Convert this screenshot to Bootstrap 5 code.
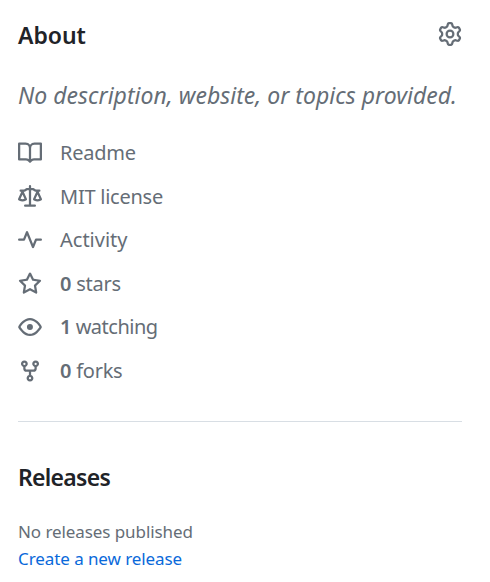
<!DOCTYPE html>
<html lang="en">
<head>
<meta charset="utf-8">
<meta name="viewport" content="width=device-width, initial-scale=1">
<title>About</title>
<link href="https://cdn.jsdelivr.net/npm/bootstrap@5.3.0/dist/css/bootstrap.min.css" rel="stylesheet">
<style>
body{font-family:"Noto Sans",sans-serif;color:#1f2328;background:#fff}
.sidebar{padding:18px 28px 0 18px}
.muted{color:#656d76}
.heading{font:600 23px/34px "Noto Sans",sans-serif;margin:0;white-space:nowrap;letter-spacing:-.05px}
.releases-title{margin-top:38px;letter-spacing:-.72px}
.desc{font:italic 23px/36px "Noto Sans",sans-serif;margin:25px 0 0;white-space:nowrap;letter-spacing:.02px}
.meta{margin:18px 0 0}
.meta li{height:43.55px;gap:18px;font:20px/43.5px "Noto Sans",sans-serif;white-space:nowrap;letter-spacing:-.25px}
.meta .wide{letter-spacing:0}
.meta .tight{letter-spacing:-.5px}
.meta svg,.gear{width:24px;height:24px;fill:currentColor;flex:none}
.meta svg{margin-top:.6px}
.rule{height:1px;background:#d8dee4;margin-top:29px}
.small-text{font:17px/27px "Noto Sans",sans-serif;white-space:nowrap;letter-spacing:-.08px}
.link-new{color:#0969da;text-decoration:none}
</style>
</head>
<body>
<aside class="sidebar">
<div class="d-flex justify-content-between align-items-start">
<h2 class="heading">About</h2>
<a href="#" class="muted d-flex pt-1" aria-label="Settings"><svg class="gear" viewBox="0 0 16 16"><path d="M8 0a8.2 8.2 0 0 1 .701.031C9.444.095 9.99.645 10.16 1.29l.288 1.107c.018.066.079.158.212.224.231.114.454.243.668.386.123.082.233.09.299.071l1.103-.303c.644-.176 1.392.021 1.82.63.27.385.506.792.704 1.218.315.675.111 1.422-.364 1.891l-.814.806c-.049.048-.098.147-.088.294.016.257.016.515 0 .772-.01.147.038.246.088.294l.814.806c.475.469.679 1.216.364 1.891a7.977 7.977 0 0 1-.704 1.217c-.428.61-1.176.807-1.82.63l-1.102-.302c-.067-.019-.177-.011-.3.071a5.909 5.909 0 0 1-.668.386c-.133.066-.194.158-.211.224l-.29 1.106c-.168.646-.715 1.196-1.458 1.26a8.006 8.006 0 0 1-1.402 0c-.743-.064-1.289-.614-1.458-1.26l-.289-1.106c-.018-.066-.079-.158-.212-.224a5.738 5.738 0 0 1-.668-.386c-.123-.082-.233-.09-.299-.071l-1.103.303c-.644.176-1.392-.021-1.82-.63a8.12 8.12 0 0 1-.704-1.218c-.315-.675-.111-1.422.363-1.891l.815-.806c.05-.048.098-.147.088-.294a6.214 6.214 0 0 1 0-.772c.01-.147-.038-.246-.088-.294l-.815-.806C.635 6.045.431 5.298.746 4.623a7.92 7.92 0 0 1 .704-1.217c.428-.61 1.176-.807 1.82-.63l1.102.302c.067.019.177.011.3-.071.214-.143.437-.272.668-.386.133-.066.194-.158.211-.224l.29-1.106C6.009.645 6.556.095 7.299.03 7.53.01 7.764 0 8 0Zm-.571 1.525c-.036.003-.108.036-.137.146l-.289 1.105c-.147.561-.549.967-.998 1.189-.173.086-.34.183-.5.29-.417.278-.97.423-1.529.27l-1.103-.303c-.109-.03-.175.016-.195.045-.22.312-.412.644-.573.99-.014.031-.021.11.059.19l.815.806c.411.406.562.957.53 1.456a4.709 4.709 0 0 0 0 .582c.032.499-.119 1.05-.53 1.456l-.815.806c-.081.08-.073.159-.059.19.162.346.353.677.573.989.02.03.085.076.195.046l1.102-.303c.56-.153 1.113-.008 1.53.27.161.107.328.204.501.29.447.222.85.629.997 1.189l.289 1.105c.029.109.101.143.137.146a6.6 6.6 0 0 0 1.142 0c.036-.003.108-.036.137-.146l.289-1.105c.147-.561.549-.967.998-1.189.173-.086.34-.183.5-.29.417-.278.97-.423 1.529-.27l1.103.303c.109.029.175-.016.195-.045.22-.313.411-.644.573-.99.014-.031.021-.11-.059-.19l-.815-.806c-.411-.406-.562-.957-.53-1.456a4.709 4.709 0 0 0 0-.582c-.032-.499.119-1.05.53-1.456l.815-.806c.081-.08.073-.159.059-.19a6.464 6.464 0 0 0-.573-.989c-.02-.03-.085-.076-.195-.046l-1.102.303c-.56.153-1.113.008-1.53-.27a4.44 4.44 0 0 0-.501-.29c-.447-.222-.85-.629-.997-1.189l-.289-1.105c-.029-.11-.101-.143-.137-.146a6.6 6.6 0 0 0-1.142 0ZM11 8a3 3 0 1 1-6 0 3 3 0 0 1 6 0ZM9.5 8a1.5 1.5 0 1 0-3.001.001A1.5 1.5 0 0 0 9.5 8Z"/></svg></a>
</div>
<p class="desc muted">No description, website, or topics provided.</p>
<ul class="meta muted list-unstyled">
<li class="d-flex align-items-center"><svg viewBox="0 0 16 16"><path d="M0 1.75A.75.75 0 0 1 .75 1h4.253c1.227 0 2.317.59 3 1.501A3.743 3.743 0 0 1 11.006 1h4.245a.75.75 0 0 1 .75.75v10.5a.75.75 0 0 1-.75.75h-4.507a2.25 2.25 0 0 0-1.591.659l-.622.621a.75.75 0 0 1-1.06 0l-.622-.621A2.25 2.25 0 0 0 5.258 13H.75a.75.75 0 0 1-.75-.75Zm7.251 10.324.004-5.073-.002-2.253A2.25 2.25 0 0 0 5.003 2.5H1.5v9h3.757a3.75 3.75 0 0 1 1.994.574ZM8.755 4.75l-.004 7.322a3.752 3.752 0 0 1 1.992-.572H14.5v-9h-3.495a2.25 2.25 0 0 0-2.25 2.25Z"/></svg><span>Readme</span></li>
<li class="d-flex align-items-center"><svg viewBox="0 0 16 16"><path d="M8.75.75V2h.985c.304 0 .603.08.867.231l1.29.736c.038.022.08.033.124.033h2.234a.75.75 0 0 1 0 1.5h-.427l2.111 4.692a.75.75 0 0 1-.154.838l-.53-.53.529.531-.001.002-.002.002-.006.006-.006.005-.01.01-.045.04c-.21.176-.441.327-.686.45C14.556 10.78 13.88 11 13 11a4.498 4.498 0 0 1-2.023-.454 3.544 3.544 0 0 1-.686-.45l-.045-.04-.016-.015-.006-.006-.004-.004v-.001a.75.75 0 0 1-.154-.838L12.178 4.5h-.162c-.305 0-.604-.079-.868-.231l-1.29-.736a.245.245 0 0 0-.124-.033H8.75V13h2.5a.75.75 0 0 1 0 1.5h-6.5a.75.75 0 0 1 0-1.5h2.5V3.5h-.984a.245.245 0 0 0-.124.033l-1.289.737c-.265.15-.564.23-.869.23h-.162l2.112 4.692a.75.75 0 0 1-.154.838l-.53-.53.529.531-.001.002-.002.002-.006.006-.016.015-.045.04c-.21.176-.441.327-.686.45C4.556 10.78 3.88 11 3 11a4.498 4.498 0 0 1-2.023-.454 3.544 3.544 0 0 1-.686-.45l-.045-.04-.016-.015-.006-.006-.004-.004v-.001a.75.75 0 0 1-.154-.838L2.178 4.5H1.75a.75.75 0 0 1 0-1.5h2.234a.249.249 0 0 0 .125-.033l1.288-.737c.265-.15.564-.23.869-.23h.984V.75a.75.75 0 0 1 1.5 0Zm2.945 8.477c.285.135.718.273 1.305.273s1.02-.138 1.305-.273L13 6.327Zm-10 0c.285.135.718.273 1.305.273s1.02-.138 1.305-.273L3 6.327Z"/></svg><span>MIT license</span></li>
<li class="wide d-flex align-items-center"><svg viewBox="0 0 16 16"><path d="M6 2c.306 0 .582.187.696.471L10 10.731l1.304-3.26A.751.751 0 0 1 12 7h3.25a.75.75 0 0 1 0 1.5h-2.742l-1.812 4.528a.751.751 0 0 1-1.392 0L6 4.77 4.696 8.03A.75.75 0 0 1 4 8.5H.75a.75.75 0 0 1 0-1.5h2.742l1.812-4.529A.751.751 0 0 1 6 2Z"/></svg><span>Activity</span></li>
<li class="d-flex align-items-center"><svg viewBox="0 0 16 16"><path d="M8 .25a.75.75 0 0 1 .673.418l1.882 3.815 4.21.612a.75.75 0 0 1 .416 1.279l-3.046 2.97.719 4.192a.751.751 0 0 1-1.088.791L8 12.347l-3.766 1.98a.75.75 0 0 1-1.088-.79l.72-4.194L.818 6.374a.75.75 0 0 1 .416-1.28l4.21-.611L7.327.668A.75.75 0 0 1 8 .25Zm0 2.445L6.615 5.5a.75.75 0 0 1-.564.41l-3.097.45 2.24 2.184a.75.75 0 0 1 .216.664l-.528 3.084 2.769-1.456a.75.75 0 0 1 .698 0l2.77 1.456-.53-3.084a.75.75 0 0 1 .216-.664l2.24-2.183-3.096-.45a.75.75 0 0 1-.564-.41L8 2.694Z"/></svg><span><b class="fw-semibold">0</b> stars</span></li>
<li class="tight d-flex align-items-center"><svg viewBox="0 0 16 16"><path d="M8 2c1.981 0 3.671.992 4.933 2.078 1.27 1.091 2.187 2.345 2.637 3.023a1.62 1.62 0 0 1 0 1.798c-.45.678-1.367 1.932-2.637 3.023C11.67 13.008 9.981 14 8 14c-1.981 0-3.671-.992-4.933-2.078C1.797 10.83.88 9.576.43 8.898a1.62 1.62 0 0 1 0-1.798c.45-.677 1.367-1.931 2.637-3.022C4.33 2.992 6.019 2 8 2ZM1.679 7.932a.12.12 0 0 0 0 .136c.411.622 1.241 1.75 2.366 2.717C5.176 11.758 6.527 12.5 8 12.5c1.473 0 2.825-.742 3.955-1.715 1.124-.967 1.954-2.096 2.366-2.717a.12.12 0 0 0 0-.136c-.412-.621-1.242-1.75-2.366-2.717C10.824 4.242 9.473 3.5 8 3.5c-1.473 0-2.825.742-3.955 1.715-1.124.967-1.954 2.096-2.366 2.717ZM8 10a2 2 0 1 1-.001-3.999A2 2 0 0 1 8 10Z"/></svg><span><b class="fw-semibold">1</b> watching</span></li>
<li class="d-flex align-items-center"><svg viewBox="0 0 16 16"><path d="M5 5.372v.878c0 .414.336.75.75.75h4.5a.75.75 0 0 0 .75-.75v-.878a2.25 2.25 0 1 1 1.5 0v.878a2.25 2.25 0 0 1-2.25 2.25h-1.5v2.128a2.251 2.251 0 1 1-1.5 0V8.5h-1.5A2.25 2.25 0 0 1 3.5 6.25v-.878a2.25 2.25 0 1 1 1.5 0ZM5 3.25a.75.75 0 1 0-1.5 0 .75.75 0 0 0 1.5 0Zm6.75.75a.75.75 0 1 0 0-1.5.75.75 0 0 0 0 1.5Zm-3 8.75a.75.75 0 1 0-1.5 0 .75.75 0 0 0 1.5 0Z"/></svg><span><b class="fw-semibold">0</b> forks</span></li>
</ul>
<div class="rule"></div>
<h2 class="heading releases-title">Releases</h2>
<div class="small-text muted mt-4">No releases published</div>
<div class="small-text"><a class="link-new" href="#">Create a new release</a></div>
</aside>
<script src="https://cdn.jsdelivr.net/npm/bootstrap@5.3.0/dist/js/bootstrap.bundle.min.js"></script>
</body>
</html>
